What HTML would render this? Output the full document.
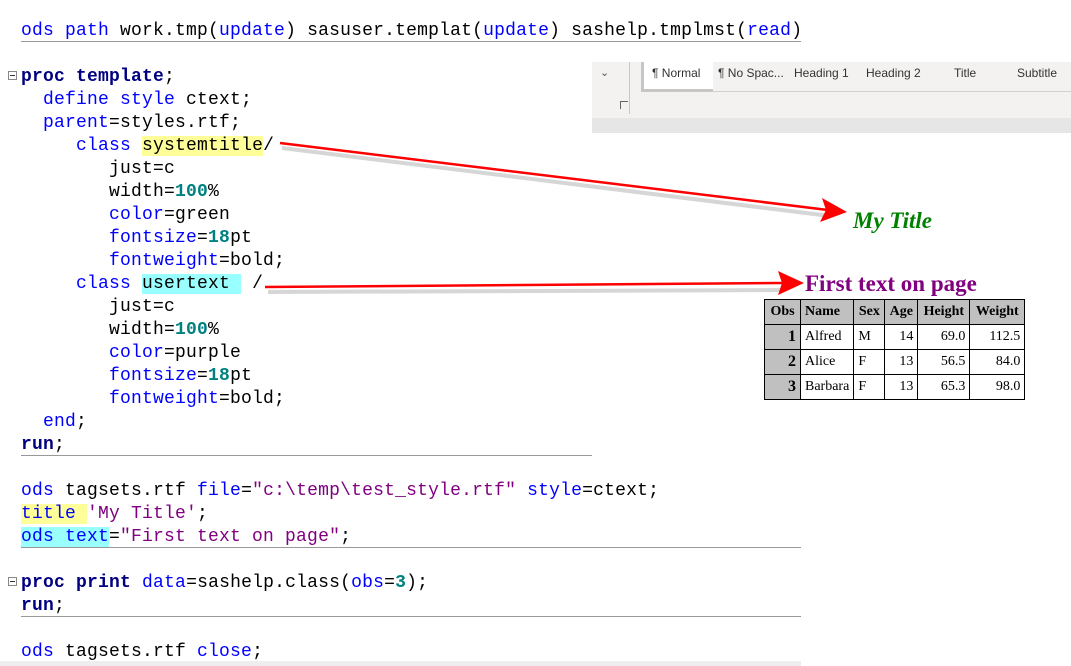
<!DOCTYPE html>
<html><head><meta charset="utf-8"><style>
body{margin:0;width:1071px;height:666px;background:#fff;position:relative;overflow:hidden}
.l{position:absolute;left:21px;height:23px;line-height:23px;font:18px "Liberation Mono",monospace;letter-spacing:0.2px;white-space:pre;color:#000;transform:translateY(3px)}
.k{color:#0000ff}.b{color:#000080;font-weight:bold}.n{color:#008080;font-weight:bold}.s{color:#800080}
.hy{background:#ffff99}.hc{background:#99ffff}
.hr{position:absolute;height:1px;background:#999}
.fold{position:absolute;left:8px;width:7px;height:7px;border:1px solid #888;font-size:0}
.fold:after{content:"";position:absolute;left:1px;top:3px;width:5px;height:1px;background:#333}
table{position:absolute;left:764px;top:299px;border-collapse:collapse;font:14px "Liberation Serif",serif}
td,th{border:1px solid #000;padding:0 4px;height:24px}
th{background:#c0c0c0;font-weight:bold}
td.o{background:#c0c0c0;font-weight:bold;text-align:right;font-size:16px}
td.r{text-align:right}
</style></head><body>
<div class="l" style="top:18px"><span class="k">ods path</span> work.tmp(<span class="k">update</span>) sasuser.templat(<span class="k">update</span>) sashelp.tmplmst(<span class="k">read</span>)</div>
<div class="hr" style="left:21px;top:41px;width:780px"></div>

<div style="position:absolute;left:592px;top:62px;width:479px;height:56px;background:#f3f2f1"></div>
<div style="position:absolute;left:592px;top:118px;width:479px;height:15px;background:#e6e6e6"></div>
<div style="position:absolute;left:629px;top:62px;width:1px;height:52px;background:#c8c8c8"></div>
<div style="position:absolute;left:641px;top:91px;width:430px;height:1px;background:#d0d0d0"></div>
<div style="position:absolute;left:641px;top:62px;width:69px;height:27px;border-left:3px solid #c6c6c6;border-bottom:3px solid #c6c6c6;background:#fff"></div>
<div style="position:absolute;left:600px;top:66px;font:11px 'Liberation Sans',sans-serif;color:#555">⌄</div>
<div style="position:absolute;left:620px;top:101px;width:7px;height:7px;border-left:1px solid #666;border-top:1px solid #666"></div>
<div style="position:absolute;left:592px;top:66px;width:480px;font:12px 'Liberation Sans',sans-serif;color:#333;white-space:pre"><span style="position:absolute;left:60px">¶ Normal</span><span style="position:absolute;left:126px">¶ No Spac...</span><span style="position:absolute;left:202px">Heading 1</span><span style="position:absolute;left:274px">Heading 2</span><span style="position:absolute;left:362px">Title</span><span style="position:absolute;left:425px">Subtitle</span></div>

<div class="fold" style="top:71px"></div>
<div class="l" style="top:64px"><span class="b">proc template</span>;</div>
<div class="l" style="top:87px">  <span class="k">define style</span> ctext;</div>
<div class="l" style="top:110px">  <span class="k">parent</span>=styles.rtf;</div>
<div class="l" style="top:133px">     <span class="k">class</span> <span class="hy">systemtitle</span>/</div>
<div class="l" style="top:156px">        just=c</div>
<div class="l" style="top:179px">        width=<span class="n">100</span>%</div>
<div class="l" style="top:202px">        <span class="k">color</span>=green</div>
<div class="l" style="top:225px">        <span class="k">fontsize</span>=<span class="n">18</span>pt</div>
<div class="l" style="top:248px">        <span class="k">fontweight</span>=bold;</div>
<div class="l" style="top:271px">     <span class="k">class</span> <span class="hc">usertext </span> /</div>
<div class="l" style="top:294px">        just=c</div>
<div class="l" style="top:317px">        width=<span class="n">100</span>%</div>
<div class="l" style="top:340px">        <span class="k">color</span>=purple</div>
<div class="l" style="top:363px">        <span class="k">fontsize</span>=<span class="n">18</span>pt</div>
<div class="l" style="top:386px">        <span class="k">fontweight</span>=bold;</div>
<div class="l" style="top:409px">  <span class="k">end</span>;</div>
<div class="l" style="top:432px"><span class="b">run</span>;</div>
<div class="hr" style="left:21px;top:455px;width:571px"></div>

<div class="l" style="top:478px"><span class="k">ods</span> tagsets.rtf <span class="k">file</span>=<span class="s">"c:\temp\test_style.rtf"</span> <span class="k">style</span>=ctext;</div>
<div class="l" style="top:501px"><span class="k hy">title </span><span class="s">'My Title'</span>;</div>
<div class="l" style="top:524px"><span class="k hc">ods text</span>=<span class="s">"First text on page"</span>;</div>
<div class="hr" style="left:21px;top:547px;width:780px"></div>
<div class="fold" style="top:577px"></div>
<div class="l" style="top:570px"><span class="b">proc print</span> <span class="k">data</span>=sashelp.class(<span class="k">obs</span>=<span class="n">3</span>);</div>
<div class="l" style="top:593px"><span class="b">run</span>;</div>
<div class="hr" style="left:21px;top:616px;width:780px"></div>
<div class="l" style="top:639px"><span class="k">ods</span> tagsets.rtf <span class="k">close</span>;</div>
<div style="position:absolute;left:0;top:661px;width:801px;height:5px;background:#eee"></div>

<svg style="position:absolute;left:0;top:0" width="1071" height="666">
<g stroke="#bbb" stroke-width="4" opacity="0.6" fill="none"><line x1="282" y1="148" x2="830" y2="216"/><line x1="268" y1="292" x2="785" y2="290"/></g>
<g stroke="#f00" stroke-width="2.5"><line x1="280" y1="143" x2="828" y2="210"/><line x1="265" y1="287" x2="782" y2="283"/></g>
<polygon points="847,212 822,198 826,210 820,222" fill="#f00"/>
<polygon points="804,283 778,271 782,283 778,295" fill="#f00"/>
</svg>

<div style="position:absolute;left:853px;top:208px;font:italic bold 23px 'Liberation Serif',serif;color:#008000">My Title</div>
<div style="position:absolute;left:805px;top:271px;font:bold 23px 'Liberation Serif',serif;color:#800080">First text on page</div>

<table>
<tr><th style="width:27px">Obs</th><th style="width:42px;text-align:left">Name</th><th style="width:22px">Sex</th><th style="width:24px">Age</th><th style="width:43px">Height</th><th style="width:46px">Weight</th></tr>
<tr><td class="o">1</td><td>Alfred</td><td>M</td><td class="r">14</td><td class="r">69.0</td><td class="r">112.5</td></tr>
<tr><td class="o">2</td><td>Alice</td><td>F</td><td class="r">13</td><td class="r">56.5</td><td class="r">84.0</td></tr>
<tr><td class="o">3</td><td>Barbara</td><td>F</td><td class="r">13</td><td class="r">65.3</td><td class="r">98.0</td></tr>
</table>
</body></html>
